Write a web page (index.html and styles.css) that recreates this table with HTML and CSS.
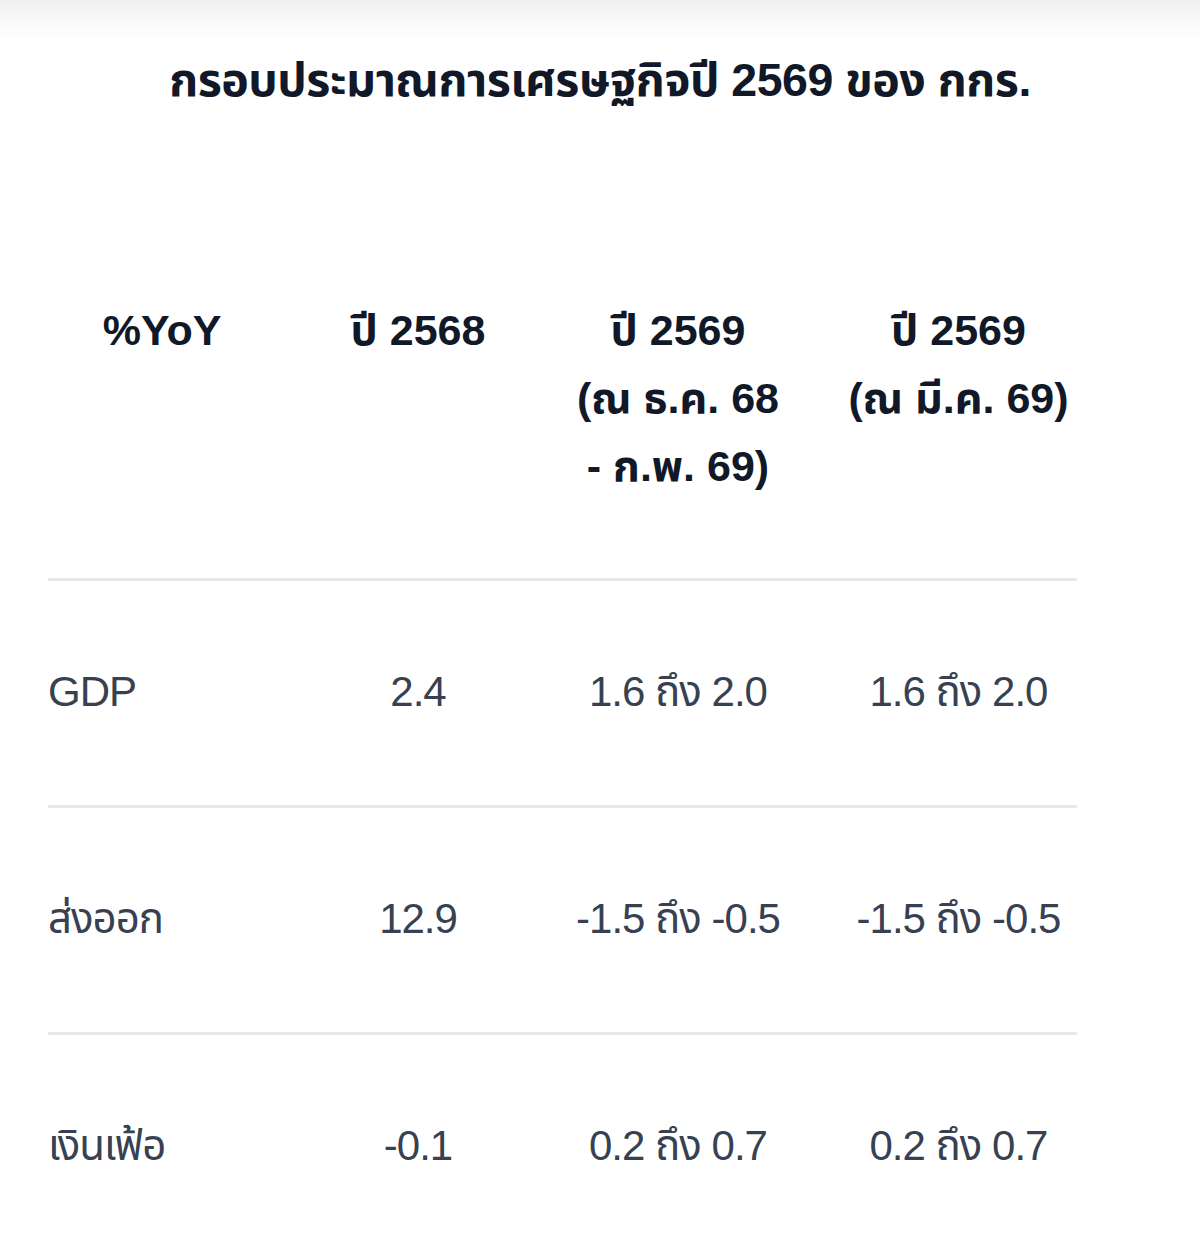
FILE: index.html
```html
<!DOCTYPE html>
<html lang="th">
<head>
    <meta charset="UTF-8">
    <meta name="viewport" content="width=device-width, initial-scale=1.0">
    <title>กรอบประมาณการเศรษฐกิจปี 2569 ของ กกร.</title>
    <link rel="stylesheet" href="styles.css">
</head>
<body>
    <h1 class="title">กรอบประมาณการเศรษฐกิจปี 2569 ของ กกร.</h1>

    <div class="forecast">
        <div class="row head">
            <div class="cell label">%YoY</div>
            <div class="cell">ปี 2568</div>
            <div class="cell">ปี 2569<br>(ณ ธ.ค. 68<br>- ก.พ. 69)</div>
            <div class="cell last">ปี 2569<br>(ณ มี.ค. 69)</div>
        </div>
        <div class="row">
            <div class="cell label">GDP</div>
            <div class="cell">2.4</div>
            <div class="cell">1.6 ถึง 2.0</div>
            <div class="cell last">1.6 ถึง 2.0</div>
        </div>
        <div class="row">
            <div class="cell label">ส่งออก</div>
            <div class="cell">12.9</div>
            <div class="cell">-1.5 ถึง -0.5</div>
            <div class="cell last">-1.5 ถึง -0.5</div>
        </div>
        <div class="row">
            <div class="cell label">เงินเฟ้อ</div>
            <div class="cell">-0.1</div>
            <div class="cell">0.2 ถึง 0.7</div>
            <div class="cell last">0.2 ถึง 0.7</div>
        </div>
    </div>
</body>
</html>
```

FILE: styles.css
```css
body {
    margin: 0;
    background: linear-gradient(#f1f1f1, #ffffff 40px) no-repeat #ffffff;
    font-family: "Liberation Sans", "Noto Sans Thai", sans-serif;
    color: #374151;
}
.title {
    margin: 0;
    padding-top: 46px;
    font-size: 46.5px;
    line-height: 68px;
    font-weight: 700;
    color: #111827;
    text-align: center;
    letter-spacing: -0.5px;
}
.forecast {
    width: 1029px;
    margin: 102px 0 0 48px;
}
.row {
    display: grid;
    grid-template-columns: 228px 284px 236px 281px;
    padding: 77px 0 79px;
    border-bottom: 3px solid #e8e8ea;
    font-size: 42px;
    line-height: 68px;
    letter-spacing: -1px;
}
.row.head {
    padding: 80px 0 78px;
    font-size: 43px;
    font-weight: 700;
    color: #111827;
    letter-spacing: 0;
}
.cell {
    text-align: center;
}
.cell.last {
    padding-left: 44px;
}
.cell.label {
    text-align: left;
}
.head .cell.label {
    text-align: center;
}
```
